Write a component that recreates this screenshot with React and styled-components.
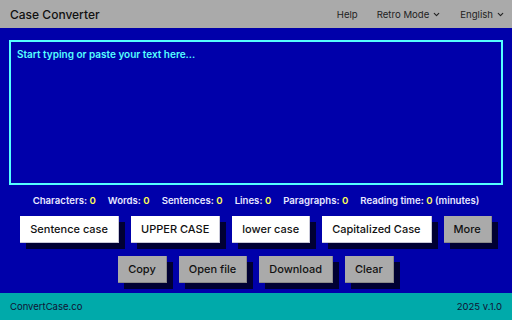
import React from "react";
import styled, { createGlobalStyle } from "styled-components";

const GlobalStyle = createGlobalStyle`
  html, body {
    margin: 0;
    padding: 0;
    height: 100%;
  }
  body {
    font-family: Inter, "Liberation Sans", sans-serif;
    background: #0000aa;
  }
  #root {
    height: 100%;
  }
`;

const Page = styled.div`
  display: flex;
  flex-direction: column;
  width: 512px;
  height: 320px;
  background: #0000aa;
`;

const Header = styled.header`
  display: flex;
  align-items: center;
  justify-content: space-between;
  height: 28px;
  padding: 0 7px 0 10px;
  background: #aaaaaa;
  box-sizing: border-box;
`;

const Title = styled.div`
  font-size: 12px;
  font-weight: 500;
  color: #111;
`;

const Nav = styled.nav`
  display: flex;
  align-items: center;
  gap: 19px;
`;

const NavItem = styled.span`
  display: flex;
  align-items: center;
  gap: 3px;
  font-size: 9.6px;
  color: #222;
`;

const Main = styled.main`
  flex: 1;
  display: flex;
  flex-direction: column;
  align-items: center;
  padding: 12px 9px 0;
`;

const TextBox = styled.textarea`
  width: 494px;
  height: 145px;
  box-sizing: border-box;
  background: #0000aa;
  border: 2px solid #55ffff;
  padding: 6px 6px;
  resize: none;
  outline: none;
  font-family: Inter, "Liberation Sans", sans-serif;
  font-size: 10px;
  font-weight: 600;
  color: #55ffff;
  &::placeholder {
    color: #55ffff;
    opacity: 1;
  }
`;

const Stats = styled.div`
  display: flex;
  gap: 12px;
  margin-top: 10px;
  font-size: 9.6px;
  font-weight: 600;
  color: #e8e8ff;
  white-space: nowrap;
`;

const Num = styled.span`
  color: #ffff55;
`;

const ButtonRow = styled.div`
  display: flex;
  gap: 12px;
  margin-top: ${p => p.$top}px;
`;

const Button = styled.button`
  flex-shrink: 0;
  white-space: nowrap;
  height: 27px;
  padding: 0 10px;
  box-sizing: border-box;
  font-family: Inter, "Liberation Sans", sans-serif;
  font-size: 11px;
  font-weight: 500;
  color: #111;
  background: ${p => (p.$gray ? "#aaaaaa" : "#ffffff")};
  border: none;
  border-right: 1px solid ${p => (p.$gray ? "#8a8a8a" : "#c8c8d8")};
  border-bottom: 1px solid ${p => (p.$gray ? "#8a8a8a" : "#c8c8d8")};
  box-shadow: 6px 6px 0 #000033;
  cursor: pointer;
`;

const Footer = styled.footer`
  display: flex;
  align-items: center;
  justify-content: space-between;
  height: 27px;
  padding: 0 10px;
  background: #00aaaa;
  font-size: 9.5px;
  color: #113;
`;

const Chevron = () => (
  <svg width="9" height="9" viewBox="0 0 24 24" fill="none" stroke="#222" strokeWidth="3" strokeLinecap="round" strokeLinejoin="round">
    <path d="M6 9l6 6 6-6" />
  </svg>
);

const stats = [
  ["Characters", "0"],
  ["Words", "0"],
  ["Sentences", "0"],
  ["Lines", "0"],
  ["Paragraphs", "0"],
];

export default function App() {
  return (
    <Page>
      <GlobalStyle />
      <Header>
        <Title>Case Converter</Title>
        <Nav>
          <NavItem>Help</NavItem>
          <NavItem>
            Retro Mode <Chevron />
          </NavItem>
          <NavItem>
            English <Chevron />
          </NavItem>
        </Nav>
      </Header>
      <Main>
        <TextBox placeholder="Start typing or paste your text here..." />
        <Stats>
          {stats.map(([label, value]) => (
            <span key={label}>
              {label}: <Num>{value}</Num>
            </span>
          ))}
          <span>
            Reading time: <Num>0</Num> (minutes)
          </span>
        </Stats>
        <ButtonRow $top={10}>
          <Button>Sentence case</Button>
          <Button>UPPER CASE</Button>
          <Button>lower case</Button>
          <Button>Capitalized Case</Button>
          <Button $gray>More</Button>
        </ButtonRow>
        <ButtonRow $top={13}>
          <Button $gray>Copy</Button>
          <Button $gray>Open file</Button>
          <Button $gray>Download</Button>
          <Button $gray>Clear</Button>
        </ButtonRow>
      </Main>
      <Footer>
        <span>ConvertCase.co</span>
        <span>2025 v.1.0</span>
      </Footer>
    </Page>
  );
}
